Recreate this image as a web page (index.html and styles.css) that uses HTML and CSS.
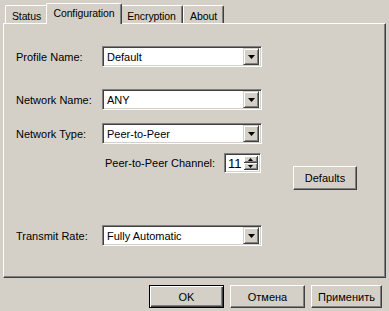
FILE: index.html
```html
<!DOCTYPE html>
<html>
<head>
<meta charset="utf-8">
<link rel="stylesheet" href="styles.css">
</head>
<body>
<div class="dialog">
  <div class="tabs">
    <div class="tab t-status">Status</div>
    <div class="tab t-config active">Configuration</div>
    <div class="tab t-enc">Encryption</div>
    <div class="tab t-about">About</div>
  </div>
  <div class="panel">
    <div class="row r1">
      <div class="label">Profile Name:</div>
      <div class="combo"><span class="val">Default</span><span class="dd"><svg width="7" height="4" viewBox="0 0 7 4"><path d="M0 0h7L3.5 4z" fill="#000"/></svg></span></div>
    </div>
    <div class="row r2">
      <div class="label">Network Name:</div>
      <div class="combo"><span class="val">ANY</span><span class="dd"><svg width="7" height="4" viewBox="0 0 7 4"><path d="M0 0h7L3.5 4z" fill="#000"/></svg></span></div>
    </div>
    <div class="row r3">
      <div class="label">Network Type:</div>
      <div class="combo"><span class="val">Peer-to-Peer</span><span class="dd"><svg width="7" height="4" viewBox="0 0 7 4"><path d="M0 0h7L3.5 4z" fill="#000"/></svg></span></div>
    </div>
    <div class="row r4">
      <div class="chlabel">Peer-to-Peer Channel:</div>
      <div class="spin"><span class="val">11</span>
        <span class="spbtns">
          <span class="spb"><svg width="5" height="3" viewBox="0 0 5 3"><path d="M2.5 0L5 3H0z" fill="#000"/></svg></span>
          <span class="spb"><svg width="5" height="3" viewBox="0 0 5 3"><path d="M0 0h5L2.5 3z" fill="#000"/></svg></span>
        </span>
      </div>
      <div class="btn defaults">Defaults</div>
    </div>
    <div class="row r5">
      <div class="label">Transmit Rate:</div>
      <div class="combo"><span class="val">Fully Automatic</span><span class="dd"><svg width="7" height="4" viewBox="0 0 7 4"><path d="M0 0h7L3.5 4z" fill="#000"/></svg></span></div>
    </div>
  </div>
  <div class="buttons">
    <div class="btn default">OK</div>
    <div class="btn">Отмена</div>
    <div class="btn apply">Применить</div>
  </div>
</div>
</body>
</html>
```
FILE: styles.css
```css
* { box-sizing: border-box; }
html, body { margin: 0; padding: 0; }
body {
  background: #d4d0c8;
  font-family: "Liberation Sans", Arial, sans-serif;
  font-size: 11px;
  color: #000;
  width: 389px;
  height: 311px;
  overflow: hidden;
}
.dialog { padding: 3px 3px 0 3px; }
.tabs {
  display: flex;
  align-items: flex-end;
  height: 20px;
  padding-left: 2px;
}
.tab {
  height: 18px;
  background: #d4d0c8;
  border-left: 1px solid #fff;
  border-top: 1px solid #fff;
  border-right: 1px solid #404040;
  box-shadow: inset -1px 0 #808080;
  border-radius: 2px 2px 0 0;
  display: flex;
  align-items: center;
  justify-content: center;
  padding-top: 2px;
  position: relative;
  font-size: 10.5px;
  letter-spacing: -0.1px;
  white-space: nowrap;
}
.t-status { width: 43px; }
.t-config { width: 76px; }
.t-enc { width: 63px; }
.t-about { width: 41px; }
.tab.active {
  height: 21px;
  margin: 0 -2px -1px -2px;
  z-index: 2;
  padding-top: 0;
  padding-bottom: 3px;
}
.panel {
  height: 255px;
  border-left: 1px solid #fff;
  border-top: 1px solid #fff;
  border-right: 1px solid #404040;
  border-bottom: 1px solid #404040;
  box-shadow: inset -1px -1px #808080;
  padding-left: 12px;
  display: flex;
  flex-direction: column;
}
.row { display: flex; align-items: center; }
.r1 { margin-top: 22px; }
.r2 { margin-top: 22px; }
.r3 { margin-top: 13px; }
.r4 { margin-top: 9px; align-items: flex-start; }
.r5 { margin-top: 35px; }
.label { width: 86px; }
.combo {
  width: 160px;
  height: 21px;
  background: #fff;
  border-top: 1px solid #808080;
  border-left: 1px solid #808080;
  border-right: 1px solid #fff;
  border-bottom: 1px solid #fff;
  box-shadow: inset 1px 1px #404040, inset -1px -1px #d4d0c8;
  display: flex;
  align-items: center;
  padding: 2px;
}
.combo .val { flex: 1; padding-left: 2px; }
.dd {
  width: 16px;
  height: 17px;
  background: #d4d0c8;
  border-top: 1px solid #d4d0c8;
  border-left: 1px solid #d4d0c8;
  border-right: 1px solid #404040;
  border-bottom: 1px solid #404040;
  box-shadow: inset 1px 1px #fff, inset -1px -1px #808080;
  display: flex;
  align-items: center;
  justify-content: center;
}
.dd svg { display: block; }
.chlabel { margin-left: 89px; width: 119px; height: 20px; line-height: 20px; }
.spin {
  width: 37px;
  height: 20px;
  background: #fff;
  border-top: 1px solid #808080;
  border-left: 1px solid #808080;
  border-right: 1px solid #fff;
  border-bottom: 1px solid #fff;
  box-shadow: inset 1px 1px #404040, inset -1px -1px #d4d0c8;
  display: flex;
  padding: 2px;
}
.spin .val { flex: 1; font-size: 13px; line-height: 16px; padding-left: 1px; }
.spbtns { display: flex; flex-direction: column; width: 14px; }
.spb {
  flex: 1;
  background: #d4d0c8;
  border-right: 1px solid #404040;
  border-bottom: 1px solid #404040;
  box-shadow: inset 1px 1px #fff, inset -1px -1px #808080;
  display: flex;
  align-items: center;
  justify-content: center;
}
.spb svg { display: block; }
.btn {
  height: 23px;
  width: 75px;
  background: #d4d0c8;
  border-top: 1px solid #fff;
  border-left: 1px solid #fff;
  border-right: 1px solid #404040;
  border-bottom: 1px solid #404040;
  box-shadow: inset -1px -1px #808080;
  display: flex;
  align-items: center;
  justify-content: center;
}
.defaults { width: 64px; height: 24px; margin-top: 13px; margin-left: 32px; }
.buttons {
  display: flex;
  justify-content: flex-end;
  gap: 6px;
  margin-top: 7px;
  padding-right: 4px;
}
.btn.apply { width: 71px; }
.btn.default {
  border: 1px solid #000;
  box-shadow: inset 1px 1px #fff, inset -1px -1px #404040, inset -2px -2px #808080;
}
```
